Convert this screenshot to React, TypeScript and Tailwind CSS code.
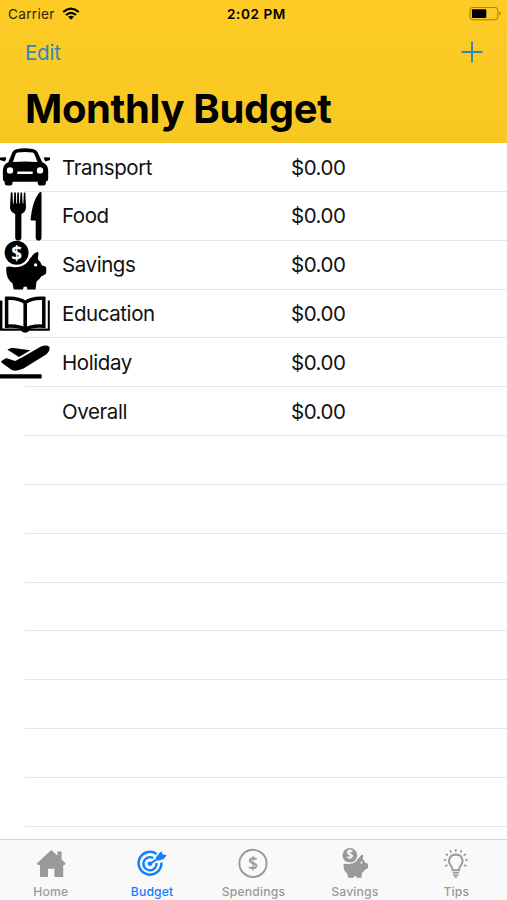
import type { ReactNode } from "react";

const CarIcon = () => (
  <svg viewBox="0 0 50 49" className="h-[49px] w-[50px]">
    <path
      fillRule="evenodd"
      d="M16.5 6.2Q25 4.5 33.5 6.2Q36.3 6.8 37.6 9.3L42.2 19.2Q48 21.3 48.2 27V35Q48.2 38.2 45.9 38.5V40.3Q45.9 42.6 43.4 42.6H40.4Q37.8 42.6 37.8 40.3V38.7H12.5V40.3Q12.5 42.6 10 42.6H7.2Q4.7 42.6 4.7 40.3V38.5Q2.9 38.2 2.9 35V27Q3.1 21.3 8.3 19.2L12.4 9.3Q13.7 6.8 16.5 6.2ZM17.5 9.4Q16.2 9.7 15.6 11.2L12.9 19.1Q25 17.9 37.5 19.1L34.5 11.2Q33.9 9.7 32.6 9.4Q25 8.4 17.5 9.4ZM10 24.2A3.2 3.2 0 1 0 10 30.6A3.2 3.2 0 1 0 10 24.2ZM40 24.2A3.2 3.2 0 1 0 40 30.6A3.2 3.2 0 1 0 40 24.2ZM17.3 28.4H32.7V31H17.3Z"
    />
    <path d="M0 14.5L5.6 14.3Q6.8 15 6 16.2L4.8 18.6L0 17ZM50 14.5L44.6 14.3Q43.4 15 44.2 16.2L45.4 18.6L50 17Z" />
  </svg>
);

const CutleryIcon = () => (
  <svg viewBox="0 0 50 49" className="h-[49px] w-[50px]">
    <path d="M10.8.5H12.5L13 11.5H13.7L14.3.5H15.9L16.3 11.5H17L17.3.5H18.9L19.2 11.5H19.9L20.5.5H22L22.6 11.5H23.3L23.9.5H25.3L26 15Q26.1 20 21.4 22V45.5Q21.4 48.6 18.3 48.6Q15.2 48.6 15.2 45.5V22Q10 20 10 15Z" />
    <path d="M41.5.2V45.5Q41.5 48.6 38.6 48.6Q35.7 48.6 35.7 45.5V28.5H31.5Q30.3 28.5 30.6 27Q32.5 9 39 1Q40.6-.3 41.5.2Z" />
  </svg>
);

const PiggyIcon = ({ className, coin }: { className: string; coin: string }) => (
  <svg viewBox="0 0 50 49" className={className} fill="currentColor">
    <path
      fillRule="evenodd"
      d="M6.3 26.2Q8 25.3 10 25.6Q15 27.2 22 25Q28 22.5 29.8 17.6L31.6 15.8Q33.6 11.8 38 10.8Q38.9 12 37.8 18.2Q40.5 20.5 41.8 24.2L45.2 25.4Q46.2 25.8 46.2 27V31.8Q46.2 33 45 33.5L41.2 35.4Q39.5 38.3 36.5 40.5L35.5 48.4H27.4L26.7 45.8H23.7L23 48.4H13.8L12.4 42.2Q5.5 37.5 6.3 26.2ZM35.6 22.2A1.7 1.7 0 1 0 35.6 25.6A1.7 1.7 0 1 0 35.6 22.2Z"
    />
    <circle cx="16.6" cy="11.8" r="12" />
    <text
      x="16.6"
      y="18.7"
      textAnchor="middle"
      fontSize="19"
      className={coin}
    >
      $
    </text>
  </svg>
);

const BookIcon = () => (
  <svg viewBox="0 0 50 49" className="h-[49px] w-[50px]" fill="none" stroke="black">
    <path strokeWidth="3.5" d="M6.6 8.3Q18.5 7.6 25.2 12.4Q31.8 7.6 43.8 8.3V36.2Q31.8 35.3 25.2 39.5Q18.5 35.3 6.6 36.2Z" />
    <path strokeWidth="3.6" d="M25.2 12V39.5" />
    <path fill="black" stroke="none" d="M0 10.4H2.4V38.4H20L25.2 40L30.4 38.4H47.8V10.4H49.8V40.8H29.4Q25.2 44.6 21 40.8H0Z" />
  </svg>
);

const TakeoffIcon = () => (
  <svg viewBox="0 0 50 49" className="h-[49px] w-[50px]">
    <path d="M1.3 23.2L5.3 20.6Q6.5 20 7.6 20.4L15.2 22.9L22.3 19.2L41 8.6Q46.5 6.4 49.2 8.8Q50.8 12.6 46.5 16.2L23.5 30.5Q17 33.6 12.4 32.2Q10.5 31.6 9 30L2 25Q1 24 1.3 23.2Z" />
    <path d="M7.3 11.6L11.4 10Q12.4 9.7 13.5 9.9L30.4 12.2L18.9 19Z" />
    <path d="M0 36.3H41.6V40.4H0Z" />
  </svg>
);

const HomeIcon = () => (
  <svg viewBox="0 0 32 32" className="size-8" fill="currentColor">
    <path d="M16.3 2L22.4 7.5V3.6H26.6V11.4L30.8 15.5L29.4 17.1H28.2V29H19.4V20.8H13V29H5V17.1H2.9L1.7 15.5Z" />
  </svg>
);

const TargetIcon = () => (
  <svg viewBox="0 0 32 32" className="size-8" fill="none" stroke="currentColor">
    <path strokeWidth="2.5" d="M20.6 5.9A11.4 11.4 0 1 0 25.4 14.6" />
    <path strokeWidth="2.4" d="M17.2 10A6.6 6.6 0 1 0 20.5 15" />
    <circle cx="14" cy="15.8" r="2.3" fill="currentColor" stroke="none" />
    <path strokeWidth="2" d="M14 15.8L24.5 8.8" />
    <path fill="currentColor" stroke="none" d="M19.8 9.2L25.4 3L26.3 6.2L30.8 7.2L27.4 11.3L21.6 12.8Z" />
  </svg>
);

const DollarIcon = () => (
  <svg viewBox="0 0 32 32" className="size-8" fill="currentColor">
    <circle cx="16" cy="15.4" r="13.6" fill="none" stroke="currentColor" strokeWidth="1.9" />
    <text x="16" y="21.5" textAnchor="middle" fontSize="17.5" className="font-['Open_Sans',sans-serif] font-semibold">
      $
    </text>
  </svg>
);

const BulbIcon = () => (
  <svg viewBox="0 0 32 32" className="size-8" fill="none" stroke="currentColor">
    <path strokeWidth="2" d="M12.6 22.2Q12.5 19.5 10.5 17Q8.8 14.6 9 12.3Q9.8 6.6 15.8 6.4Q21.8 6.6 22.6 12.3Q22.8 14.6 21.1 17Q19.1 19.5 19 22.2Z" />
    <path strokeWidth="1.5" d="M12.6 24.8H19M13 27H18.6M14.4 29H17.2" />
    <path
      strokeWidth="1.6"
      d="M15.8 1V3.7M10.1 2.2L11.1 4.6M21.5 2.2L20.5 4.6M5.8 6L7.9 7.6M25.8 6L23.7 7.6M3.7 12H6.5M25.1 12H27.9M5.2 18.2L7.6 16.9M26.4 18.2L24 16.9"
    />
  </svg>
);

const WifiIcon = () => (
  <svg viewBox="0 0 18 13" className="ml-[7px] h-[13px] w-[18px]" fill="none" stroke="black">
    <path strokeWidth="2.3" d="M1.2 5Q9-1.8 16.8 5" />
    <path strokeWidth="2.1" d="M4 8Q9 3.6 14 8" />
    <path fill="black" stroke="none" d="M6.1 9.8Q9 7.5 11.9 9.8L9 12.7Z" />
  </svg>
);

const BatteryIcon = () => (
  <svg viewBox="0 0 32 14" className="h-[14px] w-8">
    <rect x=".9" y=".4" width="28" height="12.4" rx="3" fill="none" stroke="#9b7d1a" />
    <rect x="2.9" y="2.2" width="14.4" height="8.8" rx="1" />
    <path d="M30.3 4.5Q31.7 4.9 31.7 6.5T30.3 8.7Z" fill="#9b7d1a" />
  </svg>
);

const budgets: { name: string; amount: string; icon?: ReactNode }[] = [
  { name: "Transport", amount: "$0.00", icon: <CarIcon /> },
  { name: "Food", amount: "$0.00", icon: <CutleryIcon /> },
  {
    name: "Savings",
    amount: "$0.00",
    icon: (
      <PiggyIcon
        className="h-[49px] w-[50px] overflow-visible"
        coin="fill-white font-['Open_Sans',sans-serif] font-bold"
      />
    ),
  },
  { name: "Education", amount: "$0.00", icon: <BookIcon /> },
  { name: "Holiday", amount: "$0.00", icon: <TakeoffIcon /> },
  { name: "Overall", amount: "$0.00" },
];

const tabs = [
  { name: "Home", icon: <HomeIcon /> },
  { name: "Budget", icon: <TargetIcon />, active: true },
  { name: "Spendings", icon: <DollarIcon /> },
  {
    name: "Savings",
    icon: (
      <PiggyIcon
        className="h-[30px] w-8 overflow-visible"
        coin="fill-[#f9f9f9] font-['Open_Sans',sans-serif] font-bold"
      />
    ),
  },
  { name: "Tips", icon: <BulbIcon /> },
];

const Header = () => (
  <header className="h-[143px] shrink-0 bg-linear-to-b from-[#fecb25] to-[#f7c822]">
    <div className="grid h-[27px] grid-cols-3 items-center pr-[6px] pl-2 text-[13.6px]">
      <div className="flex items-center pt-px">
        <span className="tracking-[0.3px] text-[#2b240c]">Carrier</span>
        <WifiIcon />
      </div>
      <span className="pt-px pl-1 text-center font-semibold tracking-[0.55px]">2:02 PM</span>
      <div className="flex justify-end">
        <BatteryIcon />
      </div>
    </div>
    <div className="flex h-[50px] items-center justify-between pr-6 pl-[25px] text-[#2c88bb]">
      <button className="pt-[2px] text-[20.5px] leading-none tracking-[-0.2px]">Edit</button>
      <svg viewBox="0 0 22 22" className="size-[22px]" stroke="currentColor" strokeWidth="1.9">
        <path d="M11 .5V21.5M.5 11H21.5" />
      </svg>
    </div>
    <h1 className="pt-[7px] pl-[25px] text-[40px] leading-[50px] font-bold tracking-[-0.36px]">
      Monthly Budget
    </h1>
  </header>
);

const BudgetList = () => (
  <main className="min-h-0 flex-1 overflow-hidden">
    {budgets.map((item) => (
      <div key={item.name} className="flex h-[48.85px]">
        <div className="z-10 h-[49px] w-[25px] shrink-0">{item.icon}</div>
        <div className="flex flex-1 items-center border-b border-[#e7e7e8] pt-[2px] pl-[37px] text-[20.5px] text-[#111]">
          <span className="w-[229px] tracking-[-0.42px]">{item.name}</span>
          <span className="tracking-[-0.5px]">{item.amount}</span>
        </div>
      </div>
    ))}
    {Array.from({ length: 8 }, (_, i) => (
      <div key={i} className="ml-[25px] h-[48.85px] border-b border-[#e7e7e8]" />
    ))}
  </main>
);

const TabBar = () => (
  <nav className="grid h-[61px] shrink-0 grid-cols-5 border-t border-[#d5d5d5] bg-[#f9f9f9]">
    {tabs.map((tab) => (
      <div
        key={tab.name}
        className={`flex flex-col items-center pt-2 ${tab.active ? "text-[#167efb]" : "text-[#999]"}`}
      >
        <div className="h-8">{tab.icon}</div>
        <span className="mt-1 text-[12.2px] leading-4 font-medium tracking-[0.15px]">
          {tab.name}
        </span>
      </div>
    ))}
  </nav>
);

export default function App() {
  return (
    <div className="flex h-screen w-full flex-col overflow-hidden bg-white font-['Inter','Liberation_Sans',sans-serif] text-black [&_svg]:max-w-none [&_svg]:shrink-0">
      <Header />
      <BudgetList />
      <TabBar />
    </div>
  );
}
